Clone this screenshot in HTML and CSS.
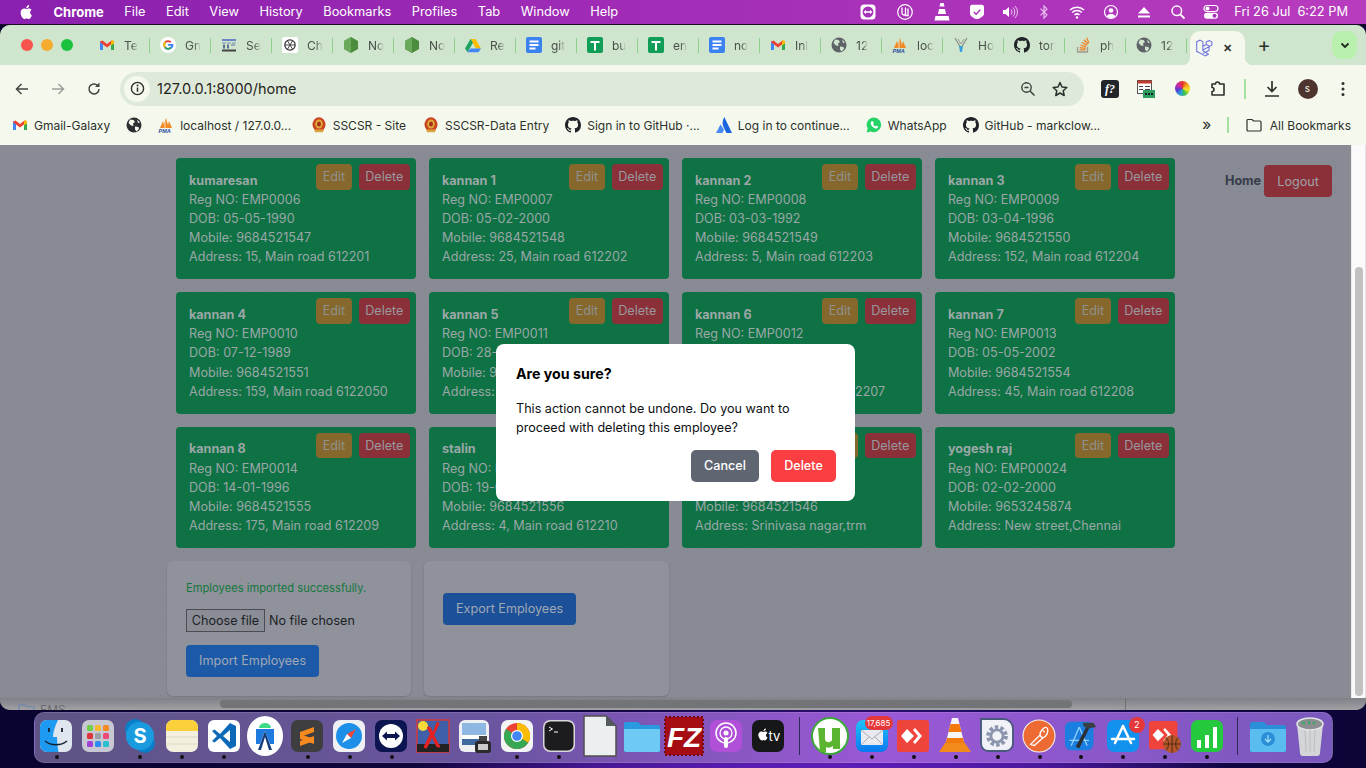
FILE: index.html
```html
<!DOCTYPE html>
<html lang="en">
<head>
<meta charset="utf-8">
<title>EMS</title>
<link rel="stylesheet" href="styles.css">
</head>
<body>
<svg class="sprite" aria-hidden="true">
  <symbol id="gmail" viewBox="0 0 16 16"><path d="M1 13V4.500L3.500 3.400 8 7l4.500-3.600L15 4.500V13H12V7.500L8 10.500 4 7.500V13z" fill="#ea4335"/><path d="M1 4.500V13h3V7.500L1 5z" fill="#4285f4"/><path d="M15 4.500V13h-3V7.500L15 5z" fill="#34a853"/><path d="M12 4.500 13.500 3 15 4.500V6.500L12 8.500z" fill="#fbbc04"/></symbol>
  <symbol id="google" viewBox="0 0 16 16"><circle cx="8" cy="8" r="8" fill="#fff"/><path d="M8 7h5.400c.4 3-1.600 5.800-5.400 5.800A4.800 4.800 0 0 1 4.600 4.600L6 6a2.900 2.900 0 0 0 2 5c1.500 0 2.600-.9 2.900-2.200H8z" fill="#4285f4"/><path d="M4.600 4.600A4.800 4.800 0 0 1 11.400 4.600L10 6A2.900 2.900 0 0 0 6 6z" fill="#ea4335"/><path d="M4.600 4.600 6 6a2.900 2.900 0 0 0-.8 2 2.900 2.900 0 0 0 .6 1.700L4.400 11a4.800 4.800 0 0 1 .2-6.400z" fill="#fbbc04"/><path d="M4.400 11l1.400-1.300A2.900 2.900 0 0 0 10 10l1.400 1.300A4.800 4.800 0 0 1 4.400 11z" fill="#34a853"/></symbol>
  <symbol id="ipr" viewBox="0 0 16 16"><rect x="1" y="2" width="14" height="2" fill="#6a86c6"/><path d="M1 5.500h4v1H1zM6 5.500h4v1H6zM11 5.500h4v1h-4z" fill="#7d8fb8"/><path d="M2 7.500h2v4H2zM6 7.500h2v4H6zM10 7.500h4v1h-4z" fill="#5f6f95"/><rect x="1" y="12.500" width="14" height="2" fill="#444"/></symbol>
  <symbol id="gpt" viewBox="0 0 16 16"><rect width="16" height="16" rx="2" fill="#fff"/><circle cx="8" cy="8" r="5.200" fill="none" stroke="#333" stroke-width="1.200"/><path d="M5.500 3.800 10.500 12.200M10.500 3.800 5.500 12.200M3 8h10" stroke="#333" stroke-width=".9"/></symbol>
  <symbol id="node" viewBox="0 0 16 16"><path d="M8 0 15 4v8l-7 4-7-4V4z" fill="#4c8c3f"/><path d="M8 0v16l-7-4V4z" fill="#6aa85a"/></symbol>
  <symbol id="drive" viewBox="0 0 16 16"><path d="M5.500 2h5L16 11.500h-5z" fill="#fbbc04"/><path d="M5.500 2 0 11.500 2.500 15.200 8 5.700z" fill="#1fa463"/><path d="M5.500 11.500H16L13.500 15.200H2.500z" fill="#4285f4"/></symbol>
  <symbol id="docs" viewBox="0 0 16 16"><rect width="16" height="16" rx="2" fill="#3b82f0"/><path d="M3.500 3.500h9v2h-9zM3.500 7h9v2h-9zM3.500 10.500h6v2h-6z" fill="#fff"/></symbol>
  <symbol id="sheets" viewBox="0 0 16 16"><rect width="16" height="16" rx="2" fill="#0f9d58"/><path d="M3.500 4h9v2H9v7.500H7V6H3.500z" fill="#fff"/></symbol>
  <symbol id="globe" viewBox="0 0 16 16"><circle cx="8" cy="8" r="7.500" fill="#5f6368"/><path d="M4 2.500 7.500 3 9 5 7 6.500 7.500 9 5 8.500 2.500 6zM9 9.500l3.500.5.500 2L10.500 14.500 9 12.500zM11 2.500l3 3-2 .5z" fill="#cfe5cd"/></symbol>
  <symbol id="globe-dark" viewBox="0 0 16 16"><circle cx="8" cy="8" r="7.500" fill="#2d2f33"/><path d="M4 2.500 7.500 3 9 5 7 6.500 7.500 9 5 8.500 2.500 6zM9 9.500l3.500.5.500 2L10.500 14.500 9 12.500zM11 2.500l3 3-2 .5z" fill="#f5f8ec"/></symbol>
  <symbol id="pma" viewBox="0 0 16 16"><path d="M2 11 5 4l1 4 2-7 2 7 1-4 3 7z" fill="#f08a24"/><path d="M6 8 8 1v10H6z" fill="#f6b26b"/><text x="0.500" y="15.500" font-size="5.500" font-weight="800" font-style="italic" fill="#2b4a9b" font-family="Liberation Sans, sans-serif">PMA</text></symbol>
  <symbol id="vee" viewBox="0 0 16 16"><path d="M2 1 8 11 14 1" fill="none" stroke="#8a8f85" stroke-width="1.200"/><path d="M5 2 8 7l3-5" fill="none" stroke="#9a9f95" stroke-width="1"/><path d="M6 9h4l-1 6H7z" fill="#3aa0dc"/></symbol>
  <symbol id="github" viewBox="0 0 16 16"><path fill="#1f2328" d="M8 0C3.580 0 0 3.580 0 8c0 3.540 2.290 6.530 5.470 7.590.4.070.55-.17.55-.38 0-.19-.01-.82-.01-1.490-2.010.37-2.530-.49-2.690-.94-.09-.23-.48-.94-.82-1.130-.28-.15-.68-.52-.01-.53.630-.01 1.080.58 1.230.82.720 1.210 1.870.87 2.330.66.070-.52.280-.87.510-1.070-1.780-.2-3.640-.89-3.640-3.950 0-.87.310-1.590.820-2.150-.08-.2-.36-1.020.08-2.120 0 0 .67-.21 2.200.82.640-.18 1.320-.27 2-.27s1.360.09 2 .27c1.530-1.040 2.200-.82 2.200-.82.440 1.100.160 1.920.080 2.120.510.560.820 1.270.820 2.150 0 3.070-1.870 3.750-3.650 3.950.290.250.540.730.540 1.480 0 1.070-.01 1.930-.01 2.200 0 .210.150.460.550.380A8.010 8.010 0 0 0 16 8c0-4.420-3.580-8-8-8z"/></symbol>
  <symbol id="so" viewBox="0 0 16 16"><path d="M2.500 10v5h10v-5" fill="none" stroke="#9b9b8e" stroke-width="1.300"/><path d="M4.500 12.800h6M4.700 10.600l6 .8M5.400 8l5.800 1.900M6.800 5.300l5.100 3.100M9 2.800l3.900 4.500M11.800 .8l2 5.400" stroke="#f0802a" stroke-width="1.300" fill="none"/></symbol>
  <symbol id="laravel" viewBox="0 0 16 16"><path d="M1.500 2.500 4.500 1 7 2.500v8L12 13.500 9 15 3.500 12 1.500 11zM7 6.500l3-1.700V2.700L12.500 1.300 15 2.700v2.600l-2.500 1.500-5.500 3M10 4.800l2.500 1.500M12.500 6.800V10L7 13M12.500 10 9 12" fill="none" stroke="#7378e0" stroke-width="1" stroke-linejoin="round"/></symbol>
  <symbol id="sscsr" viewBox="0 0 16 16"><ellipse cx="8" cy="7.500" rx="6.500" ry="7.200" fill="#c9431f"/><ellipse cx="8" cy="7" rx="3.800" ry="4.500" fill="#e2a93b"/><ellipse cx="8" cy="7" rx="2" ry="2.600" fill="#a5301a"/><path d="M3 12.500h10l-1 2.800H4z" fill="#d9a441"/></symbol>
  <symbol id="atl" viewBox="0 0 16 16"><path d="M8.300 0C6 4 6 7.500 8 11l2.500 5H16z" fill="#1a66e0"/><path d="M4.500 7.500 0 16h6.500L8 12.500z" fill="#4a8cf5"/></symbol>
  <symbol id="wa" viewBox="0 0 16 16"><path d="M8 .5a7.300 7.300 0 0 0-6.300 11L.6 15.500l4.100-1.100A7.300 7.300 0 1 0 8 .5z" fill="#25d366"/><path d="M5.500 4.200c-.6.500-1.100 1.500-.7 2.700.7 2 2.400 3.800 4.500 4.500 1.200.4 2.200-.2 2.600-.9l.2-1-1.800-.9-.8.900c-1-.3-2-1.300-2.400-2.400l.8-.9L7 4.200z" fill="#fff"/></symbol>
</svg>

<div class="menubar">
  <div class="menu-left">
    <svg class="apple" viewBox="0 0 16 18"><path d="M11.600 9.500c0-2 1.600-2.900 1.700-3-1-1.300-2.400-1.500-2.900-1.500-1.200-.1-2.400.7-3 .7s-1.600-.7-2.600-.7C3.400 5 2.100 5.800 1.400 7c-1.400 2.400-.4 6 1 8 .7 1 1.500 2 2.500 2s1.400-.6 2.600-.6 1.500.6 2.600.6 1.800-1 2.400-2c.8-1.100 1.100-2.200 1.100-2.300 0 0-2-.8-2-3.200zM9.700 3.700C10.200 3 10.600 2 10.500 1c-.8 0-1.900.600-2.500 1.300-.5.600-1 1.600-.9 2.500 1 .1 1.900-.4 2.600-1.100z" fill="#fff"/></svg>
    <b class="menu-app">Chrome</b>
    <span>File</span><span>Edit</span><span>View</span><span>History</span><span>Bookmarks</span><span>Profiles</span><span>Tab</span><span>Window</span><span>Help</span>
  </div>
  <div class="menu-right">
    <span class="slot slot-w"><svg class="st" viewBox="0 0 16 16"><rect x="0.500" y="0.500" width="15" height="15" rx="3.500" fill="#fff"/><circle cx="8" cy="8" r="5.500" fill="#a533b8"/><path d="M3.500 8l2.500-2v1.300h4V6l2.500 2L10 10V8.700H6V10z" fill="#fff"/></svg></span>
    <span class="slot slot-w"><svg class="st" viewBox="0 0 16 16"><circle cx="8" cy="8" r="7.300" fill="none" stroke="#fff" stroke-width="1.200"/><path d="M5 3.500V9c0 2 2.200 2.600 3.500 1.200V3.500M8.500 6.500V11.500H11V4.500" fill="none" stroke="#fff" stroke-width="1.300"/></svg></span>
    <span class="slot slot-w"><svg class="st st-tall" viewBox="0 0 16 18"><path d="M6.300 0h3.400l.8 3.500h-5z" fill="#fff"/><path d="M5 6h6l1 5H4z" fill="#fff"/><path d="M1.500 13h13l1 4.500H.5z" fill="#fff"/></svg></span>
    <span class="slot"><svg class="st" viewBox="0 0 16 16"><path d="M3 .8h10c1 0 2 1 2 2V10c0 2-5 5.200-7 5.200S1 12 1 10V2.800c0-1 1-2 2-2z" fill="#fff"/><path d="M4.800 8l2.400 2.200L11.200 5.800" fill="none" stroke="#a533b8" stroke-width="1.400"/></svg></span>
    <span class="slot"><svg class="st" viewBox="0 0 16 16"><path d="M1 6v4h2.500L7 13V3L3.500 6z" fill="#fff"/><path d="M9 5.500a3.500 3.500 0 0 1 0 5M11 3.500a6.500 6.500 0 0 1 0 9M13 2a8.500 8.500 0 0 1 0 12" fill="none" stroke="#e9c5ef" stroke-width="1"/></svg></span>
    <span class="slot"><svg class="st" viewBox="0 0 16 16"><path d="M4.500 4.700 11 10.800 8 14V2l3 3.200L4.500 11.300" fill="none" stroke="#e9c5ef" stroke-width="1.100"/></svg></span>
    <span class="slot"><svg class="st" viewBox="0 0 16 16"><path d="M1 6a10 10 0 0 1 14 0M3.200 8.500a7 7 0 0 1 9.600 0M5.500 11a3.700 3.700 0 0 1 5 0" fill="none" stroke="#fff" stroke-width="1.500"/><circle cx="8" cy="13.500" r="1.200" fill="#fff"/></svg></span>
    <span class="slot"><svg class="st" viewBox="0 0 16 16"><circle cx="8" cy="8" r="6.500" fill="none" stroke="#fff" stroke-width="1.200"/><circle cx="8" cy="6.500" r="2.300" fill="#fff"/><path d="M3.800 12.500C4.500 10.500 6 10 8 10s3.500.5 4.200 2.500L8 14.500z" fill="#fff"/></svg></span>
    <span class="slot"><svg class="st" viewBox="0 0 16 16"><path d="M8 3l6 6.500H2z" fill="#fff"/><rect x="2" y="11.500" width="12" height="2" fill="#fff"/></svg></span>
    <span class="slot"><svg class="st" viewBox="0 0 16 16"><circle cx="6.800" cy="6.800" r="4.800" fill="none" stroke="#fff" stroke-width="1.500"/><path d="M10.300 10.300 14.500 14.500" stroke="#fff" stroke-width="1.800"/></svg></span>
    <span class="slot"><svg class="st" viewBox="0 0 16 16"><rect x="1" y="1.500" width="14" height="6" rx="3" fill="none" stroke="#fff" stroke-width="1.200"/><circle cx="4.500" cy="4.500" r="2" fill="#fff"/><rect x="1" y="8.700" width="14" height="6" rx="3" fill="#fff"/><circle cx="11.500" cy="11.700" r="2" fill="#a533b8"/></svg></span>
    <span class="clock">Fri 26 Jul</span><span class="clock clock-time">6:22 PM</span>
  </div>
</div>

<div class="window">
  <div class="tabstrip">
    <div class="lights"><i class="light red"></i><i class="light amber"></i><i class="light green"></i></div>
    <div class="tab"><svg class="fav"><use href="#gmail"/></svg><span class="tab-title">Te</span></div>
    <div class="tab"><svg class="fav"><use href="#google"/></svg><span class="tab-title">Gn</span></div>
    <div class="tab"><svg class="fav"><use href="#ipr"/></svg><span class="tab-title">Se</span></div>
    <div class="tab"><svg class="fav"><use href="#gpt"/></svg><span class="tab-title">Ch</span></div>
    <div class="tab"><svg class="fav"><use href="#node"/></svg><span class="tab-title">No</span></div>
    <div class="tab"><svg class="fav"><use href="#node"/></svg><span class="tab-title">No</span></div>
    <div class="tab"><svg class="fav"><use href="#drive"/></svg><span class="tab-title">Re</span></div>
    <div class="tab"><svg class="fav"><use href="#docs"/></svg><span class="tab-title">git</span></div>
    <div class="tab"><svg class="fav"><use href="#sheets"/></svg><span class="tab-title">bu</span></div>
    <div class="tab"><svg class="fav"><use href="#sheets"/></svg><span class="tab-title">en</span></div>
    <div class="tab"><svg class="fav"><use href="#docs"/></svg><span class="tab-title">no</span></div>
    <div class="tab"><svg class="fav"><use href="#gmail"/></svg><span class="tab-title">Inl</span></div>
    <div class="tab"><svg class="fav"><use href="#globe"/></svg><span class="tab-title">12</span></div>
    <div class="tab"><svg class="fav"><use href="#pma"/></svg><span class="tab-title">loc</span></div>
    <div class="tab"><svg class="fav"><use href="#vee"/></svg><span class="tab-title">Ho</span></div>
    <div class="tab"><svg class="fav"><use href="#github"/></svg><span class="tab-title">tor</span></div>
    <div class="tab"><svg class="fav"><use href="#so"/></svg><span class="tab-title">ph</span></div>
    <div class="tab"><svg class="fav"><use href="#globe"/></svg><span class="tab-title">12</span></div>
    <div class="tab-active"><svg class="fav fav-active"><use href="#laravel"/></svg><span class="tab-close">✕</span></div>
    <span class="tab-new">+</span>
    <span class="tab-search"><svg viewBox="0 0 12 12"><path d="M2.500 4.500 6 8l3.500-3.500" fill="none" stroke="#1f2a1f" stroke-width="1.800"/></svg></span>
  </div>

  <div class="toolbar">
    <svg class="tool t-back" viewBox="0 0 16 16"><path d="M14 8H3M7.500 3 2.500 8l5 5" fill="none" stroke="#3f4641" stroke-width="1.500"/></svg>
    <svg class="tool t-fwd" viewBox="0 0 16 16"><path d="M2 8h11M8.500 3l5 5-5 5" fill="none" stroke="#9aa19a" stroke-width="1.500"/></svg>
    <svg class="tool t-reload" viewBox="0 0 16 16"><path d="M13 8a5 5 0 1 1-1.500-3.600" fill="none" stroke="#3f4641" stroke-width="1.500"/><path d="M13.500 1.500V6H9z" fill="#3f4641"/></svg>
    <div class="omnibox">
      <span class="info"><svg viewBox="0 0 16 16"><circle cx="8" cy="8" r="6.500" fill="none" stroke="#2b312c" stroke-width="1.500"/><path d="M8 7v4.500" stroke="#2b312c" stroke-width="1.600"/><circle cx="8" cy="4.800" r="1" fill="#2b312c"/></svg></span>
      <span class="url">127.0.0.1:8000/home</span>
      <svg class="omni-icon" viewBox="0 0 16 16"><circle cx="6.500" cy="6.500" r="4.700" fill="none" stroke="#3a403b" stroke-width="1.400"/><path d="M4.500 6.500h4M10 10l4.500 4.500" stroke="#3a403b" stroke-width="1.500"/></svg>
      <svg class="omni-icon omni-star" viewBox="0 0 16 16"><path d="M8 1.500 10 6l4.800.5-3.600 3.200 1 4.800L8 12l-4.200 2.500 1-4.800L1.200 6.500 6 6z" fill="none" stroke="#2b312c" stroke-width="1.500" stroke-linejoin="round"/></svg>
    </div>
    <span class="ext ext-f"><i>f?</i></span>
    <svg class="ext" viewBox="0 0 18 18"><rect x="0.500" y="0.500" width="14" height="13" fill="#fff" stroke="#555"/><rect x="0.500" y="0.500" width="14" height="3" fill="#c0392b"/><path d="M2 6h4v1H2zM8 6h5v1H8zM2 9h4v1H2zM8 9h5v1H8z" fill="#444"/><rect x="6" y="10" width="12" height="8" fill="#2e9e5b"/><path d="M8 13h2v2H8zM11 13h2v2h-2zM14 13h2v2h-2z" fill="#123"/></svg>
    <span class="ext ext-wheel"></span>
    <svg class="ext ext-puzzle" viewBox="0 0 18 18"><path d="M3 4h3.500a2 2 0 0 1 4 0H15v11H3v-3.500a2 2 0 0 0 0-4z" fill="none" stroke="#2b312c" stroke-width="1.600" stroke-linejoin="round"/></svg>
    <span class="tool-sep"></span>
    <svg class="ext ext-dl" viewBox="0 0 18 18"><path d="M9 1v10M4.500 7 9 11.500 13.500 7M2 16h14" fill="none" stroke="#2b312c" stroke-width="1.700"/></svg>
    <span class="avatar">s</span>
    <svg class="ext ext-more" viewBox="0 0 4 16"><circle cx="2" cy="2.500" r="1.500" fill="#2b312c"/><circle cx="2" cy="8" r="1.500" fill="#2b312c"/><circle cx="2" cy="13.500" r="1.500" fill="#2b312c"/></svg>
  </div>

  <div class="bookmarks">
    <span class="bm"><svg class="bm-ic"><use href="#gmail"/></svg>Gmail-Galaxy</span>
    <span class="bm"><svg class="bm-ic"><use href="#globe-dark"/></svg></span>
    <span class="bm bm-pma"><svg class="bm-ic"><use href="#pma"/></svg>localhost / 127.0.0...</span>
    <span class="bm"><svg class="bm-ic"><use href="#sscsr"/></svg>SSCSR - Site</span>
    <span class="bm bm-data"><svg class="bm-ic"><use href="#sscsr"/></svg>SSCSR-Data Entry</span>
    <span class="bm"><svg class="bm-ic"><use href="#github"/></svg>Sign in to GitHub ·...</span>
    <span class="bm"><svg class="bm-ic"><use href="#atl"/></svg>Log in to continue...</span>
    <span class="bm"><svg class="bm-ic"><use href="#wa"/></svg>WhatsApp</span>
    <span class="bm"><svg class="bm-ic"><use href="#github"/></svg>GitHub - markclow...</span>
    <span class="bm-end">
      <span class="bm-more">»</span>
      <span class="bm-sep"></span>
      <span class="bm"><svg class="bm-folder" viewBox="0 0 16 14"><path d="M1 2.500a1 1 0 0 1 1-1h4l1.500 1.500H14a1 1 0 0 1 1 1V12a1 1 0 0 1-1 1H2a1 1 0 0 1-1-1z" fill="none" stroke="#2b312c" stroke-width="1.200"/></svg>All Bookmarks</span>
    </span>
  </div>

  <div class="viewport">
    <div class="page">
      <div class="content">
        <div class="cards">
          <article class="card"><div class="actions"><span class="btn-edit">Edit</span><span class="btn-del">Delete</span></div><strong>kumaresan</strong><p>Reg NO: EMP0006</p><p>DOB: 05-05-1990</p><p>Mobile: 9684521547</p><p>Address: 15, Main road 612201</p></article>
          <article class="card"><div class="actions"><span class="btn-edit">Edit</span><span class="btn-del">Delete</span></div><strong>kannan 1</strong><p>Reg NO: EMP0007</p><p>DOB: 05-02-2000</p><p>Mobile: 9684521548</p><p>Address: 25, Main road 612202</p></article>
          <article class="card"><div class="actions"><span class="btn-edit">Edit</span><span class="btn-del">Delete</span></div><strong>kannan 2</strong><p>Reg NO: EMP0008</p><p>DOB: 03-03-1992</p><p>Mobile: 9684521549</p><p>Address: 5, Main road 612203</p></article>
          <article class="card"><div class="actions"><span class="btn-edit">Edit</span><span class="btn-del">Delete</span></div><strong>kannan 3</strong><p>Reg NO: EMP0009</p><p>DOB: 03-04-1996</p><p>Mobile: 9684521550</p><p>Address: 152, Main road 612204</p></article>
          <article class="card"><div class="actions"><span class="btn-edit">Edit</span><span class="btn-del">Delete</span></div><strong>kannan 4</strong><p>Reg NO: EMP0010</p><p>DOB: 07-12-1989</p><p>Mobile: 9684521551</p><p>Address: 159, Main road 6122050</p></article>
          <article class="card"><div class="actions"><span class="btn-edit">Edit</span><span class="btn-del">Delete</span></div><strong>kannan 5</strong><p>Reg NO: EMP0011</p><p>DOB: 28-01-1995</p><p>Mobile: 9684521552</p><p>Address: 35, Main road 612206</p></article>
          <article class="card"><div class="actions"><span class="btn-edit">Edit</span><span class="btn-del">Delete</span></div><strong>kannan 6</strong><p>Reg NO: EMP0012</p><p>DOB: 10-10-1990</p><p>Mobile: 9684521553</p><p>Address: 152, Main road 612207</p></article>
          <article class="card"><div class="actions"><span class="btn-edit">Edit</span><span class="btn-del">Delete</span></div><strong>kannan 7</strong><p>Reg NO: EMP0013</p><p>DOB: 05-05-2002</p><p>Mobile: 9684521554</p><p>Address: 45, Main road 612208</p></article>
          <article class="card"><div class="actions"><span class="btn-edit">Edit</span><span class="btn-del">Delete</span></div><strong>kannan 8</strong><p>Reg NO: EMP0014</p><p>DOB: 14-01-1996</p><p>Mobile: 9684521555</p><p>Address: 175, Main road 612209</p></article>
          <article class="card"><div class="actions"><span class="btn-edit">Edit</span><span class="btn-del">Delete</span></div><strong>stalin</strong><p>Reg NO: EMP0015</p><p>DOB: 19-02-1994</p><p>Mobile: 9684521556</p><p>Address: 4, Main road 612210</p></article>
          <article class="card"><div class="actions"><span class="btn-edit">Edit</span><span class="btn-del">Delete</span></div><strong>raj</strong><p>Reg NO: EMP0016</p><p>DOB: 01-01-1990</p><p>Mobile: 9684521546</p><p>Address: Srinivasa nagar,trm</p></article>
          <article class="card"><div class="actions"><span class="btn-edit">Edit</span><span class="btn-del">Delete</span></div><strong>yogesh raj</strong><p>Reg NO: EMP00024</p><p>DOB: 02-02-2000</p><p>Mobile: 9653245874</p><p>Address: New street,Chennai</p></article>
        </div>
        <div class="panels">
          <section class="panel panel-import">
            <p class="success">Employees imported successfully.</p>
            <div class="file"><span class="file-btn">Choose file</span><span>No file chosen</span></div>
            <span class="btn-blue">Import Employees</span>
          </section>
          <section class="panel panel-export">
            <span class="btn-blue btn-export">Export Employees</span>
          </section>
        </div>
      </div>
      <nav class="topnav"><b>Home</b><span class="logout">Logout</span></nav>
      <div class="modal-layer">
        <div class="modal">
          <h2>Are you sure?</h2>
          <p>This action cannot be undone. Do you want to proceed with deleting this employee?</p>
          <div class="modal-actions"><span class="m-cancel">Cancel</span><span class="m-delete">Delete</span></div>
        </div>
      </div>
    </div>
    <div class="vscroll"><i class="vthumb"></i></div>
  </div>
  <div class="hstrip">
    <span class="hfile"><svg viewBox="0 0 18 14"><path d="M1 2a1 1 0 0 1 1-1h5l2 2h7a1 1 0 0 1 1 1v9H1z" fill="none" stroke="#6d86b5" stroke-width="1.200"/></svg>EMS</span>
    <i class="hthumb"></i>
    <i class="hline"></i>
  </div>
</div>

<div class="dock">
  <span class="di on"><svg viewBox="0 0 32 36"><rect y="2" width="32" height="32" rx="7" fill="#dfe6ee"/><path d="M7 2h11c-3 6-5 12-5 17h4c0 4 .5 9 1.500 15H7a7 7 0 0 1-7-7V9a7 7 0 0 1 7-7z" fill="#1e9bf0"/><path d="M9 10v4M22 10v4" stroke="#123" stroke-width="1.800"/><path d="M5 23c6 5 16 5 22 0" fill="none" stroke="#123" stroke-width="1.300"/></svg></span>
  <span class="di"><svg viewBox="0 0 32 36"><rect y="2" width="32" height="32" rx="7" fill="#c7c8d2"/><g><rect x="5" y="7" width="6" height="6" rx="1.500" fill="#6fcf4a"/><rect x="13" y="7" width="6" height="6" rx="1.500" fill="#f5b82e"/><rect x="21" y="7" width="6" height="6" rx="1.500" fill="#f08a24"/><rect x="5" y="15" width="6" height="6" rx="1.500" fill="#e0323c"/><rect x="13" y="15" width="6" height="6" rx="1.500" fill="#9ba0a8"/><rect x="21" y="15" width="6" height="6" rx="1.500" fill="#ea4a7a"/><rect x="5" y="23" width="6" height="6" rx="1.500" fill="#a040d8"/><rect x="13" y="23" width="6" height="6" rx="1.500" fill="#2a8cf0"/><rect x="21" y="23" width="6" height="6" rx="1.500" fill="#2ac0d0"/></g></svg></span>
  <span class="di on"><svg viewBox="0 0 32 36"><circle cx="11" cy="11" r="10" fill="#0a7fc9"/><circle cx="21" cy="25" r="10" fill="#0a7fc9"/><circle cx="16" cy="18" r="14" fill="#1a9be0"/><text x="16" y="25" text-anchor="middle" font-size="20" font-weight="700" fill="#fff" font-family="Inter, sans-serif">S</text></svg></span>
  <span class="di on"><svg viewBox="0 0 32 36"><rect y="2" width="32" height="32" rx="7" fill="#f4f0df"/><path d="M0 13V9a7 7 0 0 1 7-7h18a7 7 0 0 1 7 7v4z" fill="#fcd03a"/><path d="M0 19h32M0 26h32" stroke="#ddd8c4" stroke-width="1"/></svg></span>
  <span class="di on"><svg viewBox="0 0 32 36"><rect y="2" width="32" height="32" rx="6" fill="#fff"/><path d="M22 5 12 16 6.500 11.500 4 13l5 5-5 5 2.500 1.500L12 20l10 11 6-3V8zM22 12v12l-7-6z" fill="#0b69b8"/></svg></span>
  <span class="di di-big di-tall"><svg viewBox="0 0 36 40"><ellipse cx="18" cy="20" rx="18" ry="20" fill="#fff"/><path d="M12 12a6 5 0 0 1 12 0z" fill="#3ddc84"/><path d="M9 13h18v15H23L18 15l-5 13H9z" fill="#1f7ae0"/><path d="M18 15 11 34h3l4-13 4 13h3z" fill="#143d7a"/></svg></span>
  <span class="di on"><svg viewBox="0 0 32 36"><rect y="2" width="32" height="32" rx="7" fill="#3e3e40"/><path d="M9 14 23 9v5L9 19zM9 16l14 5v5L9 21zM9 23 23 18v5L9 28z" fill="#f68a1e"/></svg></span>
  <span class="di on"><svg viewBox="0 0 32 36"><rect y="2" width="32" height="32" rx="7" fill="#eef0f3"/><circle cx="16" cy="18" r="13" fill="#1e8fe8"/><path d="M23 11 18 20 14 16z" fill="#f0453a"/><path d="M9 25 18 20 14 16z" fill="#fff"/></svg></span>
  <span class="di on"><svg viewBox="0 0 32 36"><rect y="2" width="32" height="32" rx="7" fill="#0c1550"/><circle cx="16" cy="18" r="12" fill="#fff"/><path d="M7 18l5-4.500V16h8v-2.500L25 18l-5 4.500V20h-8v2.500z" fill="#0c1550"/></svg></span>
  <span class="di"><svg viewBox="0 0 32 36"><rect y="2" width="32" height="32" fill="#3f5fa8" stroke="#d23a3a" stroke-width="1.500"/><circle cx="6" cy="8" r="5" fill="#f7d83a"/><rect y="26" width="32" height="8" fill="#222"/><path d="M20 4c2 0 3 1 2 3L17 17l6 11c1 2-3 2-4 0l-4-8-5 10c-1 1-4 0-3-2l6-12-3-6c0-2 3-2 4 0l2 4 2-6z" fill="#e52020"/></svg></span>
  <span class="di"><svg viewBox="0 0 32 36"><rect y="2" width="30" height="32" rx="6" fill="#eef0f2"/><rect x="3" y="5" width="24" height="14" fill="#8fb7e3"/><rect x="3" y="17" width="24" height="4" fill="#fff"/><path d="M3 21h24v6H3z" fill="#3f6aa0"/><rect x="16" y="23" width="16" height="12" rx="3" fill="#2a2a2a"/><rect x="20" y="18" width="8" height="5" fill="#444"/><rect x="19" y="26" width="10" height="6" fill="#ccc"/></svg></span>
  <span class="di on"><svg viewBox="0 0 32 36"><rect y="2" width="32" height="32" rx="7" fill="#f3f4f6"/><circle cx="16" cy="18" r="13" fill="#ea4335"/><path d="M16 18 27.300 24.500A13 13 0 0 1 8 28.300z" fill="#34a853"/><path d="M16 5a13 13 0 0 1 11.300 19.500L16 18z" fill="#fbbc04"/><path d="M5 11l11 7-8 10.300A13 13 0 0 1 5 11z" fill="#34a853"/><circle cx="16" cy="18" r="6" fill="#fff"/><circle cx="16" cy="18" r="4.800" fill="#4285f4"/></svg></span>
  <span class="di on"><svg viewBox="0 0 32 36"><rect y="2" width="32" height="32" rx="7" fill="#d8d8d8"/><rect x="1.500" y="3.500" width="29" height="29" rx="6" fill="#1c1c1e"/><path d="M6 9l3.500 2L6 13" fill="none" stroke="#fff" stroke-width="1"/><path d="M11 14h4" stroke="#fff" stroke-width="1"/></svg></span>
  <span class="di di-tall"><svg viewBox="0 0 32 40"><path d="M0 0h22l10 10v30H0z" fill="#eceff0" stroke="#4f4f4f" stroke-width="1.500"/><path d="M22 0l10 10H22z" fill="#555a5e"/></svg></span>
  <span class="di di-big"><svg viewBox="0 0 36 36"><path d="M0 6a2 2 0 0 1 2-2h12l3 3h17a2 2 0 0 1 2 2v23a2 2 0 0 1-2 2H2a2 2 0 0 1-2-2z" fill="#2a9ae0"/><path d="M0 11h36v21a2 2 0 0 1-2 2H2a2 2 0 0 1-2-2z" fill="#6ccaf5"/></svg></span>
  <span class="di di-fz"><svg viewBox="0 0 40 40"><rect x="1" y="1" width="38" height="38" fill="#a50d12" stroke="#7a0a0e" stroke-width="2" stroke-dasharray="2 2"/><text x="20" y="31" text-anchor="middle" font-size="28" font-weight="800" font-style="italic" fill="#fff" font-family="Liberation Sans, sans-serif">FZ</text></svg></span>
  <span class="di"><svg viewBox="0 0 32 36"><rect y="2" width="32" height="32" rx="7" fill="#b050d8"/><circle cx="16" cy="15" r="10" fill="none" stroke="#fff" stroke-width="1.500"/><circle cx="16" cy="15" r="6" fill="none" stroke="#fff" stroke-width="1.300"/><circle cx="16" cy="15" r="2.500" fill="#fff"/><rect x="14" y="19" width="4" height="11" rx="2" fill="#fff"/></svg></span>
  <span class="di"><svg viewBox="0 0 32 36"><rect y="2" width="32" height="32" rx="7" fill="#151718"/><path d="M7 15c1-2 4-1.500 4.500-1 .5-.5 3-1 4 1-2 1-2 3.500 0 4.500-1 2.500-2.500 3.500-4 2.500-1.500 1-3.500 0-4.500-2.500s-1-3.500 0-4.500zM11.500 13c0-1.500 1-2.500 2.500-2.500 0 1.500-1 2.500-2.500 2.500z" fill="#fff"/><text x="16.500" y="23" font-size="13" fill="#fff" font-family="Inter, sans-serif">tv</text></svg></span>
  <span class="dock-sep"></span>
  <span class="di on di-wide"><svg viewBox="0 0 38 38"><circle cx="19" cy="19" r="18" fill="#fff" stroke="#3ca83a" stroke-width="2"/><path d="M7 11h7v11c0 4 6 4 7 1V11h8v21h-7v-3c-3 2-5 2-7 1v5H9z" fill="#5cb531"/></svg></span>
  <span class="di on"><svg viewBox="0 0 32 36"><defs><linearGradient id="ml" x1="0" y1="0" x2="0" y2="1"><stop offset="0" stop-color="#1ec4fa"/><stop offset="1" stop-color="#0a78f0"/></linearGradient></defs><rect y="2" width="32" height="32" rx="7" fill="url(#ml)"/><rect x="5" y="12" width="22" height="15" fill="#e8eaef"/><path d="M5 12 16 21 27 12M5 27l8-8M27 27l-8-8" fill="none" stroke="#a9aeb8" stroke-width="1"/></svg><em class="badge badge-mail">17,685</em></span>
  <span class="di on"><svg viewBox="0 0 32 36"><rect y="2" width="32" height="32" rx="3" fill="#ef443b"/><path d="M10 11l7 7-7 7-6-7zM18 10l7 8-7 8-2-2 5-6-5-6z" fill="#fff"/></svg></span>
  <span class="di on"><svg viewBox="0 0 32 36"><path d="M13 0h6l7 28H6z" fill="#f5f5f5"/><path d="M11.500 6h9l2 8h-13zM8 20h16l2 8H6z" fill="#f27a0d"/><path d="M6 25h20l6 9H0z" fill="#f28a1c"/></svg></span>
  <span class="di on"><svg viewBox="0 0 34 36"><path d="M0 0h24a10 10 0 0 1 10 10v16a8 8 0 0 1-8 8H8a8 8 0 0 1-8-8z" fill="#f0f2f7" stroke="#48597c" stroke-width="2"/><circle cx="17" cy="18" r="9" fill="none" stroke="#8b95ad" stroke-width="5" stroke-dasharray="3.500 2.200"/><circle cx="17" cy="18" r="6.500" fill="none" stroke="#8b95ad" stroke-width="3"/></svg></span>
  <span class="di on"><svg viewBox="0 0 34 36"><circle cx="17" cy="18" r="17" fill="#ee6a33" stroke="#f5efe8" stroke-width="1.200"/><path d="M8 27 18 17l3 3-9 8zM18 17c0-5 5-9 7-8s2 6-1 9-4 2-6-1zM21 12l2 2" fill="none" stroke="#fff" stroke-width="1.400"/></svg></span>
  <span class="di on"><svg viewBox="0 0 36 36"><rect y="2" width="32" height="32" rx="7" fill="#1a7fe0"/><path d="M7 29 16 8M25 29 16 8M5 23h22" stroke="#8fd0ff" stroke-width="1.500"/><path d="M16 32 28 8l-3-2-13 24z" fill="#2a2f33"/><path d="M20 3h12l3 5-6 1-3 1-5-3z" fill="#3a3f44"/></svg></span>
  <span class="di on"><svg viewBox="0 0 32 36"><rect y="2" width="32" height="32" rx="7" fill="#1291ee"/><path d="M16 8 8 25M16 8l8 17M5 21h22" stroke="#fff" stroke-width="2.500" stroke-linecap="round"/></svg><em class="badge badge-store">2</em></span>
  <span class="di on"><svg viewBox="0 0 36 38"><rect y="2" width="32" height="32" rx="3" fill="#ef443b"/><path d="M10 11l7 7-7 7-6-7zM18 10l7 8-7 8-2-2 5-6-5-6z" fill="#fff"/><circle cx="26" cy="28" r="10" fill="#b3562a"/><path d="M16 28h20M26 18v20M19 21c4 3 4 11 0 14M33 21c-4 3-4 11 0 14" fill="none" stroke="#4a2510" stroke-width="1"/></svg></span>
  <span class="di on"><svg viewBox="0 0 32 36"><rect y="2" width="32" height="32" rx="7" fill="#25c93d"/><path d="M6 22h4v8H6zM14 17h4v13h-4zM22 9h4v21h-4z" fill="#fff"/></svg></span>
  <span class="dock-sep"></span>
  <span class="di di-big"><svg viewBox="0 0 36 36"><path d="M0 6a2 2 0 0 1 2-2h12l3 3h17a2 2 0 0 1 2 2v23a2 2 0 0 1-2 2H2a2 2 0 0 1-2-2z" fill="#2a8fd8"/><path d="M0 11h36v21a2 2 0 0 1-2 2H2a2 2 0 0 1-2-2z" fill="#5bbcef"/><circle cx="18" cy="21" r="7" fill="#2a8fd8"/><path d="M18 17v7M15 21l3 3 3-3" fill="none" stroke="#9fdcf8" stroke-width="1.300"/></svg></span>
  <span class="di di-tall"><svg viewBox="0 0 32 40"><path d="M3 8h26l-3 29a3 3 0 0 1-3 3H9a3 3 0 0 1-3-3z" fill="#d3d5d8"/><ellipse cx="16" cy="8" rx="13" ry="6" fill="#8c8e92" stroke="#e3e4e6" stroke-width="1.500"/><path d="M8 6l3 2M14 5l2 3M21 6l-2 2" stroke="#3a6" stroke-width="2"/><path d="M11 14l1 22M21 14l-1 22M16 14v22" stroke="#bcbec2" stroke-width="1"/></svg></span>
</div>
</body>
</html>
```

FILE: styles.css
```css
* { box-sizing: border-box; }
html, body { margin: 0; height: 768px; overflow: hidden; }
body {
  font-family: Inter, "Liberation Sans", sans-serif;
  background:
    radial-gradient(ellipse 420px 90px at 820px 790px, #6a22c8 0, rgba(106,34,200,.6) 60%, transparent 100%),
    linear-gradient(90deg, #0a0430 0, #100640 40%, #1c0a60 70%, #0c0536 100%);
  display: flex;
  flex-direction: column;
}
p, h2 { margin: 0; }
.sprite { display: none; }

/* menu bar */
.menubar {
  height: 25px;
  flex: none;
  display: flex;
  justify-content: space-between;
  align-items: center;
  padding: 0 18px 1px 20px;
  color: #fff;
  font-size: 12.800px;
  background: linear-gradient(90deg, #8a20ae 0, #a02cb6 45%, #b83cbe 100%);
  border-bottom: 1px solid #1a0a22;
}
.menu-left { display: flex; align-items: center; gap: 20.500px; }
.apple { width: 14px; height: 16px; margin-right: -1px; }
.menu-app { font-size: 13px; font-weight: 700; }
.menu-right { display: flex; align-items: center; }
.slot { width: 33.500px; display: flex; justify-content: center; }
.slot-w { width: 37px; }
.st { width: 16px; height: 16px; display: block; }
.st-tall { height: 18px; }
.clock { margin-left: 6px; }
.clock-time { margin-left: 7px; }

/* window */
.window {
  flex: none;
  height: 685px;
  display: flex;
  flex-direction: column;
  border-radius: 10px;
  overflow: hidden;
  background: #8d8f94;
}
.tabstrip {
  height: 40px;
  flex: none;
  display: flex;
  align-items: center;
  background: #cfe5cd;
}
.lights { width: 88.500px; flex: none; display: flex; gap: 8px; padding-left: 21px; }
.light { width: 12px; height: 12px; border-radius: 50%; }
.red { background: #f6544d; }
.amber { background: #f5ab30; }
.green { background: #19c13d; }
.tab {
  width: 61px;
  height: 15px;
  flex: none;
  display: flex;
  align-items: center;
  padding-left: 10.500px;
  border-right: 1.500px solid #8fd08c;
}
.fav { width: 16px; height: 16px; flex: none; }
.tab-title {
  margin-left: 9px;
  white-space: nowrap;
  font-size: 12px;
  color: #4a504a;
  -webkit-mask-image: linear-gradient(90deg, #000 55%, transparent 100%);
  mask-image: linear-gradient(90deg, #000 55%, transparent 100%);
}
.tab-active {
  position: relative;
  width: 55px;
  height: 34px;
  margin: 6px 0 0 3.500px;
  flex: none;
  display: flex;
  align-items: center;
  padding-left: 5px;
  background: #f5f8ec;
  border-radius: 10px 10px 0 0;
}
.tab-active::before, .tab-active::after {
  content: "";
  position: absolute;
  bottom: 0;
  width: 8px;
  height: 8px;
}
.tab-active::before { left: -8px; background: radial-gradient(circle at 0 0, transparent 8px, #f5f8ec 8.500px); }
.tab-active::after { right: -8px; background: radial-gradient(circle at 100% 0, transparent 8px, #f5f8ec 8.500px); }
.fav-active { width: 18px; height: 18px; }
.tab-close { margin-left: 10px; font-size: 11px; font-weight: 700; color: #2b312c; }
.tab-new { margin-left: 9px; width: 20px; text-align: center; font-size: 20px; color: #2b312c; line-height: 20px; }
.tab-search {
  margin-left: auto;
  margin-right: 9px;
  width: 25px;
  height: 28px;
  border-radius: 9px;
  background: #b9f0ae;
  display: flex;
  align-items: center;
  justify-content: center;
}
.tab-search svg { width: 12px; height: 12px; }

.toolbar {
  height: 47px;
  flex: none;
  display: flex;
  align-items: center;
  background: #f5f8ec;
}
.tool { width: 16px; height: 16px; flex: none; }
.t-back { margin-left: 14px; }
.t-fwd { margin-left: 20px; }
.t-reload { margin-left: 20px; }
.omnibox {
  width: 964px;
  height: 34px;
  margin-left: 18px;
  flex: none;
  display: flex;
  align-items: center;
  border-radius: 17px;
  background: #dfe9da;
}
.info {
  width: 26px;
  height: 26px;
  margin-left: 4px;
  border-radius: 50%;
  background: #f5f8ec;
  display: flex;
  align-items: center;
  justify-content: center;
}
.info svg { width: 15px; height: 15px; }
.url { margin-left: 7px; font-size: 14.500px; color: #1f2420; margin-top: -1px; }
.omni-icon { width: 16px; height: 16px; margin-left: auto; }
.omni-star { margin-left: 16px; margin-right: 16px; }
.ext { width: 18px; height: 18px; flex: none; margin-left: 18px; display: block; }
.ext-f {
  margin-left: 17px;
  background: #22262a;
  border-radius: 3px;
  color: #fff;
  font: italic 700 12px/18px "Liberation Serif", serif;
  text-align: center;
}
.ext-f i { font-style: italic; }
.ext-wheel {
  width: 15px;
  height: 15px;
  margin-left: 19.500px;
  border-radius: 50%;
  background: conic-gradient(#e5322a, #f5a623, #f5e625, #3cc24a, #2a9de0, #5a3ad0, #d02aa8, #e5322a);
}
.ext-puzzle { margin-left: 19.500px; }
.tool-sep { width: 1.500px; height: 20px; margin-left: 17px; background: #a4e09e; }
.ext-dl { margin-left: 17px; }
.avatar {
  width: 20px;
  height: 20px;
  margin-left: 17px;
  border-radius: 50%;
  background: #4e342e;
  color: #f5f8ec;
  font-size: 10px;
  line-height: 19px;
  text-align: center;
}
.ext-more { width: 4px; height: 16px; margin-left: 23px; }

.bookmarks {
  height: 33px;
  flex: none;
  display: flex;
  align-items: center;
  padding: 0 15px 7px 12px;
  gap: 16px;
  background: #f5f8ec;
  font-size: 12px;
  color: #2b312c;
}
.bm { display: flex; align-items: center; gap: 6px; white-space: nowrap; }
.bm-pma { margin-right: 3.500px; }
.bm-data { margin-left: 1px; }
.bm-ic { width: 16px; height: 16px; }
.bm-end { margin-left: auto; display: flex; align-items: center; }
.bm-more { font-size: 16px; color: #2b312c; line-height: 16px; margin-top: -3px; }
.bm-sep { width: 1.500px; height: 16px; background: #a4e09e; margin: 0 17px 0 16px; }
.bm-folder { width: 16px; height: 14px; margin-right: 2px; }

/* page */
.viewport { flex: 1; min-height: 0; display: flex; }
.page {
  position: relative;
  width: 1351px;
  flex: none;
  display: flex;
  background-color: #888b93;
  background-image: radial-gradient(circle at 16px 23px, #7c7f87 1px, transparent 1.300px);
  background-size: 24px 24px;
  overflow: hidden;
}
.content { width: 1176.400px; padding: 13px 0 0 167px; flex: none; }
.cards {
  margin-left: 9px;
  width: 999.400px;
  display: grid;
  grid-template-columns: repeat(4, 240.400px);
  gap: 13.100px 12.600px;
}
.card {
  position: relative;
  height: 121.300px;
  padding: 12.700px 13px;
  border-radius: 4px;
  background: #0e7245;
  color: #9aa7a6;
  font-size: 12.600px;
  line-height: 19.150px;
}
.card strong { display: block; font-weight: 700; }
.actions { position: absolute; top: 6px; right: 6.500px; display: flex; gap: 7px; }
.btn-edit, .btn-del {
  height: 25.500px;
  padding: 0 6.500px;
  border-radius: 4px;
  font-size: 12.600px;
  line-height: 26.500px;
  color: #8f918f;
}
.btn-edit { background: #86682c; }
.btn-del { background: #8b3038; color: #98989e; }
.panels { display: flex; gap: 13px; margin-top: 13px; }
.panel {
  height: 135px;
  border-radius: 6px;
  background: #8f929b;
  box-shadow: 0 1px 2px rgba(60,60,70,.25);
}
.panel-import { width: 244px; padding: 19px; }
.panel-export { width: 245px; padding: 32px 19px; }
.success { font-size: 11.200px; line-height: 16px; color: #15773f; }
.file {
  display: flex;
  align-items: center;
  gap: 4px;
  margin-top: 13px;
  font-size: 12.600px;
  color: #1c1f26;
}
.file-btn {
  width: 79px;
  height: 23px;
  border: 1px solid #4a4c54;
  background: #8a8d95;
  text-align: center;
  line-height: 21px;
}
.btn-blue {
  display: inline-block;
  height: 32px;
  padding: 0 13px;
  border-radius: 4px;
  background: #1c5aa8;
  color: #a0a8b4;
  font-size: 12.600px;
  line-height: 31px;
  margin-top: 13px;
}
.btn-export { background: #1c5098; margin-top: 0; }
.topnav {
  margin-left: 48.600px;
  padding-top: 20px;
  display: flex;
  align-items: flex-start;
  gap: 3px;
  font-size: 12.600px;
  color: #363c4a;
}
.topnav b { line-height: 32px; }
.logout {
  width: 68px;
  height: 32px;
  border-radius: 4px;
  background: #8b3038;
  color: #a0a0a8;
  text-align: center;
  line-height: 33px;
}
.modal-layer {
  position: absolute;
  inset: 0;
  display: flex;
  align-items: center;
  justify-content: center;
}
.modal {
  width: 359px;
  height: 157px;
  margin-top: 2px;
  padding: 20px 20px 0;
  border-radius: 8px;
  background: #fff;
  color: #0c0f14;
  font-size: 12.600px;
  line-height: 19px;
}
.modal h2 { font-size: 14.200px; font-weight: 700; line-height: 20px; color: #000; }
.modal p { margin-top: 15px; }
.modal-actions { display: flex; justify-content: flex-end; gap: 12px; margin-top: 13px; margin-right: -1px; }
.m-cancel, .m-delete {
  height: 32px;
  border-radius: 5px;
  color: #fff;
  font-weight: 500;
  text-align: center;
  line-height: 31px;
}
.m-cancel { width: 68px; background: #5f6672; }
.m-delete { width: 65px; background: #f93f42; }

.vscroll {
  position: relative;
  flex: 1;
  background: #fafafa;
  border-left: 1px solid #ececec;
  border-right: 1px solid #e2e2e2;
}
.vthumb {
  position: absolute;
  left: 3px;
  top: 122px;
  bottom: 2px;
  width: 8px;
  border-radius: 4px;
  background: #c1c1c1;
}
.hstrip {
  position: relative;
  height: 12px;
  flex: none;
  background: linear-gradient(#7f8187, #8f9095 50%, #a2a2a4);
  display: flex;
  align-items: center;
}
.hfile { margin-left: 18px; display: flex; gap: 5px; font-size: 12px; color: #6b6d70; margin-top: 12px; line-height: 12px; }
.hfile svg { width: 17px; height: 13px; }
.hthumb { position: absolute; left: 220px; width: 852px; top: 2px; height: 8px; border-radius: 4px; background: #737478; }
.hline { position: absolute; left: 1125px; top: 0; bottom: 0; width: 1px; background: #6e7074; }

/* dock */
.dock {
  width: 1299px;
  height: 51px;
  margin: 2px 0 0 34px;
  flex: none;
  display: flex;
  align-items: center;
  gap: 9.880px;
  padding: 0 0 3px 5px;
  border-radius: 10px;
  border: 1px solid rgba(255,255,255,.12);
  background: linear-gradient(90deg, #5f5485 0, #6a55a0 35%, #9a58d6 65%, #7a58bc 100%);
}
.di {
  position: relative;
  width: 32px;
  height: 36px;
  flex: none;
  display: flex;
  align-items: center;
  justify-content: center;
}
.di svg { width: 32px; height: 36px; flex: none; display: block; overflow: visible; }
.di-big svg { width: 36px; }
.di-tall svg { height: 40px; }
.di-wide svg { width: 38px; height: 38px; }
.di-fz svg { width: 40px; height: 40px; }
.di.on::after {
  content: "";
  position: absolute;
  left: 14.500px;
  bottom: -5px;
  width: 4px;
  height: 4px;
  border-radius: 50%;
  background: #111;
}
.dock-sep { width: 1px; height: 38px; margin: 0 4px 0 5px; background: #2f2a55; flex: none; }
.badge {
  position: absolute;
  border-radius: 8px;
  background: #e5383b;
  color: #fff;
  font-style: normal;
  font-size: 8px;
  line-height: 14px;
  height: 14px;
  text-align: center;
}
.badge-mail { top: -2px; left: 9px; width: 28px; }
.badge-store { top: -1px; left: 22px; width: 16px; height: 16px; line-height: 16px; font-size: 9px; }
```
